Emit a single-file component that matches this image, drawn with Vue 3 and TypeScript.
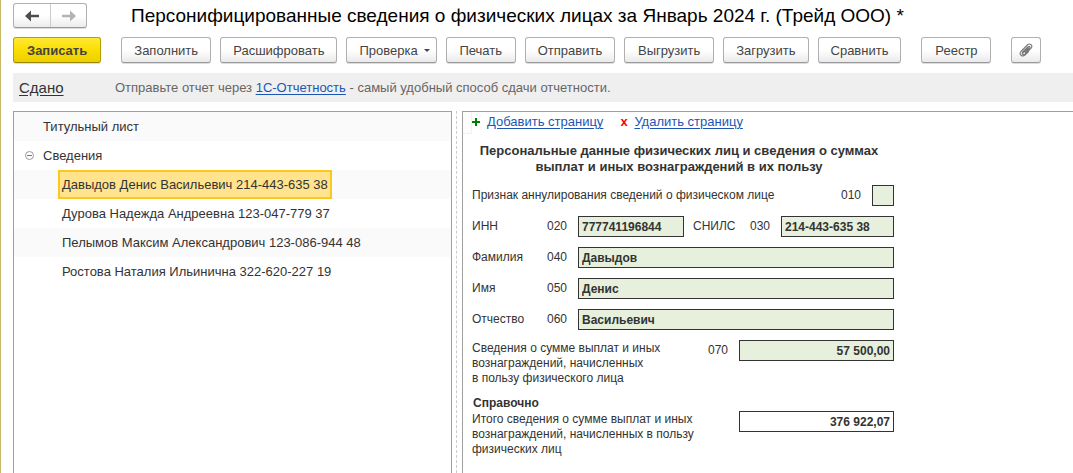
<script setup lang="ts">
import { ref } from 'vue'

interface Person {
  name: string
  snils: string
}

const people: Person[] = [
  { name: 'Давыдов Денис Васильевич', snils: '214-443-635 38' },
  { name: 'Дурова Надежда Андреевна', snils: '123-047-779 37' },
  { name: 'Пелымов Максим Александрович', snils: '123-086-944 48' },
  { name: 'Ростова Наталия Ильинична', snils: '322-620-227 19' },
]

const selected = ref(0)
const annulled = ref('')
const inn = ref('777741196844')
const snils = ref('214-443-635 38')
const lastName = ref('Давыдов')
const firstName = ref('Денис')
const patronymic = ref('Васильевич')
const amount = ref('57 500,00')
const total = ref('376 922,07')
</script>

<template>
  <main class="window">
    <header class="title-bar">
      <div class="nav">
        <button type="button" class="nav-btn" aria-label="Назад">
          <svg width="14" height="12" viewBox="0 0 14 12">
            <path d="M0 6 L6 .5 V4.8 H14 V7.2 H6 V11.5 Z" fill="#4d4d4d" />
          </svg>
        </button>
        <button type="button" class="nav-btn" aria-label="Вперед">
          <svg width="14" height="12" viewBox="0 0 14 12">
            <path d="M14 6 L8 .5 V4.8 H0 V7.2 H8 V11.5 Z" fill="#b3b3b3" />
          </svg>
        </button>
      </div>
      <h1>Персонифицированные сведения о физических лицах за Январь 2024 г. (Трейд ООО) *</h1>
    </header>

    <div class="toolbar">
      <button type="button" class="btn primary">Записать</button>
      <div class="group">
        <button type="button" class="btn wide">Заполнить</button>
        <button type="button" class="btn wide">Расшифровать</button>
        <button type="button" class="btn menu">
          Проверка
          <svg width="6" height="3" viewBox="0 0 6 3"><path d="M0 0 H6 L3 3 Z" fill="#444" /></svg>
        </button>
        <button type="button" class="btn">Печать</button>
        <button type="button" class="btn wide">Отправить</button>
        <button type="button" class="btn wide">Выгрузить</button>
        <button type="button" class="btn">Загрузить</button>
        <button type="button" class="btn">Сравнить</button>
      </div>
      <button type="button" class="btn">Реестр</button>
      <button type="button" class="btn icon" aria-label="Присоединенные файлы">
        <svg width="14" height="14" viewBox="0 0 14 14" fill="none" stroke="#777" stroke-width="1.1" stroke-linecap="round" stroke-linejoin="round">
          <path d="M3.8 10.2 L9.4 4.6 M9.6 8.6 L6 12.1 C3.3 14.5 -.4 11.3 1.9 8.5 L8.4 2 C11 -.5 14.3 2.7 12 5.3 L6.2 11 C4.4 12.6 2.2 10.7 3.7 9 L9.2 3.6 C10.4 2.6 11.6 3.9 10.6 5 L6.2 9.4" />
        </svg>
      </button>
    </div>

    <div class="banner">
      <a href="#" class="status">Сдано</a>
      <p>Отправьте отчет через <a href="#">1С-Отчетность</a> - самый удобный способ сдачи отчетности.</p>
    </div>

    <div class="panels">
      <nav class="tree" aria-label="Разделы отчета">
        <div class="row"><button type="button" class="node">Титульный лист</button></div>
        <div class="row">
          <button type="button" class="toggle" aria-label="Свернуть">
            <svg width="9" height="9" viewBox="0 0 9 9" fill="none" stroke="#999">
              <circle cx="4.5" cy="4.5" r="4" />
              <path d="M2 4.5 H7" stroke="#777" />
            </svg>
          </button>
          <button type="button" class="node">Сведения</button>
        </div>
        <div v-for="(person, i) in people" :key="person.snils" class="row child">
          <button type="button" class="node" :class="{ selected: i === selected }" @click="selected = i">
            {{ person.name }} {{ person.snils }}
          </button>
        </div>
      </nav>

      <div class="splitter"></div>

      <section class="page">
        <div class="corner"></div>
        <div class="sheet">
          <div class="page-actions">
            <svg class="plus" width="8" height="8" viewBox="0 0 8 8"><path d="M3 0 H5 V3 H8 V5 H5 V8 H3 V5 H0 V3 H3 Z" fill="#008000" /></svg>
            <a href="#">Добавить страницу</a>
            <span class="cross">x</span>
            <a href="#">Удалить страницу</a>
          </div>

          <h2>Персональные данные физических лиц и сведения о суммах<br />выплат и иных вознаграждений в их пользу</h2>

          <form @submit.prevent>
            <div class="line">
              <label class="grow" for="f010">Признак аннулирования сведений о физическом лице</label>
              <span class="code">010</span>
              <input id="f010" v-model="annulled" class="tick" type="text" />
            </div>
            <div class="line">
              <label class="name" for="f020">ИНН</label>
              <span class="code">020</span>
              <input id="f020" v-model="inn" class="inn" type="text" />
              <label class="snils-name" for="f030">СНИЛС</label>
              <span class="code">030</span>
              <input id="f030" v-model="snils" class="fill" type="text" />
            </div>
            <div class="line">
              <label class="name" for="f040">Фамилия</label>
              <span class="code">040</span>
              <input id="f040" v-model="lastName" class="fill" type="text" />
            </div>
            <div class="line">
              <label class="name" for="f050">Имя</label>
              <span class="code">050</span>
              <input id="f050" v-model="firstName" class="fill" type="text" />
            </div>
            <div class="line">
              <label class="name" for="f060">Отчество</label>
              <span class="code">060</span>
              <input id="f060" v-model="patronymic" class="fill" type="text" />
            </div>
            <div class="line tall">
              <label class="grow" for="f070">Сведения о сумме выплат и иных<br />вознаграждений, начисленных<br />в пользу физического лица</label>
              <span class="code">070</span>
              <input id="f070" v-model="amount" class="sum" type="text" />
            </div>
            <h3>Справочно</h3>
            <div class="line tall total">
              <label class="grow" for="total">Итого сведения о сумме выплат и иных<br />вознаграждений, начисленных в пользу<br />физических лиц</label>
              <input id="total" v-model="total" class="sum plain" type="text" readonly />
            </div>
          </form>
        </div>
      </section>
    </div>
  </main>
</template>

<style>
body {
  margin: 0;
  background: #fff;
}
</style>

<style scoped>
* {
  box-sizing: border-box;
}

.window {
  display: flex;
  flex-direction: column;
  min-height: 100vh;
  padding: 3px 0 0 12px;
  border-left: 1px solid #c8b96c;
  font: 13px/15px "Liberation Sans", Arial, sans-serif;
  color: #333;
}

button,
input {
  font: inherit;
  color: inherit;
}

a {
  color: #1d55b5;
  text-underline-offset: 2px;
}

.title-bar {
  display: flex;
  align-items: center;
  gap: 44px;
  height: 25px;
}

.nav {
  display: flex;
  flex: none;
  height: 25px;
  border: 1px solid #b0b0b0;
  border-bottom-color: #999;
  border-radius: 3px;
  background: linear-gradient(#fff 50%, #ececec);
  box-shadow: 0 1px 0 #ddd;
}

.nav-btn {
  display: flex;
  align-items: center;
  justify-content: center;
  width: 36px;
  padding: 0;
  border: 0;
  background: none;
}

.nav-btn + .nav-btn {
  border-left: 1px solid #ccc;
}

h1 {
  margin: 0;
  font-size: 19px;
  line-height: 24px;
  font-weight: 400;
  color: #000;
  white-space: nowrap;
}

.toolbar {
  display: flex;
  gap: 20px;
  margin-top: 9px;
}

.group {
  display: flex;
  gap: 9px;
}

.btn {
  min-width: 70px;
  height: 26px;
  padding: 0 12px;
  border: 1px solid #b0b0b0;
  border-bottom-color: #999;
  border-radius: 3px;
  background: linear-gradient(#fff 50%, #eaeaea);
  box-shadow: 0 1px 0 #ddd;
  color: #444;
  white-space: nowrap;
}

.wide {
  min-width: 90px;
}

.primary {
  padding: 0 13px;
  border-color: #b5a000;
  border-bottom-color: #998700;
  background: linear-gradient(#ffea35, #fade00 50%, #edcf00);
  font-weight: 700;
}

.menu {
  display: flex;
  align-items: center;
  gap: 6px;
  padding-right: 6px;
}

.icon {
  display: flex;
  align-items: center;
  justify-content: center;
  width: 30px;
  min-width: 0;
  padding: 0;
}

.banner {
  display: flex;
  align-items: center;
  height: 29px;
  margin-top: 10px;
  padding-left: 6px;
  background: #efefef;
  color: #666;
}

.banner p {
  margin: 0;
}

.status {
  width: 96px;
  font-size: 15px;
  color: #333;
}

.panels {
  display: grid;
  grid-template-columns: minmax(0, 439fr) 10px minmax(0, 611fr);
  flex: 1;
  margin-top: 9px;
}

.tree {
  border: 1px solid #a0a0a0;
  border-bottom: 0;
}

.row {
  display: flex;
  align-items: center;
  height: 29px;
  padding-left: 25px;
}

.row:nth-child(odd) {
  background: #fafafa;
}

.row:has(.toggle) {
  padding-left: 11px;
}

.row.child {
  padding-left: 44px;
}

.toggle {
  display: flex;
  width: 14px;
  padding: 0;
  border: 0;
  background: none;
}

.node {
  height: 29px;
  padding: 0 2px;
  border: 2px solid transparent;
  background: none;
  white-space: nowrap;
}

.node.selected {
  border-color: #fcc71e;
  background: #ffe48d;
}

.splitter {
  width: 5px;
  border-right: 1px dashed #ccc;
}

.page {
  display: flex;
  align-items: flex-start;
  border-top: 1px solid #a0a0a0;
  border-left: 1px solid #a0a0a0;
}

.corner {
  flex: none;
  width: 9px;
  height: 22px;
  border: solid #f2f2f2;
  border-width: 0 1px 1px 0;
  background: #fdfdfd;
}

.sheet {
  flex: 0 1 422px;
  min-width: 0;
}

.page-actions {
  display: flex;
  align-items: center;
  height: 19px;
}

.plus {
  margin-right: 7px;
}

.cross {
  width: 14px;
  margin-left: 17px;
  font-weight: 700;
  color: #f00;
}

h2 {
  margin: 12px 0 10px;
  padding-right: 8px;
  font-size: 13px;
  line-height: 16px;
  text-align: center;
  white-space: nowrap;
}

form {
  display: flex;
  flex-direction: column;
  gap: 10px;
  font-size: 12px;
}

.line {
  display: flex;
  align-items: center;
  white-space: nowrap;
}

.grow {
  flex: 1;
}

.name {
  width: 75px;
}

.snils-name {
  width: 66px;
  padding-left: 9px;
}

.code {
  width: 31px;
}

input {
  height: 21px;
  min-width: 0;
  padding: 0 3px;
  border: 1px solid #333;
  border-radius: 0;
  background: #e6f0dc;
  font-weight: 700;
}

.tick {
  width: 22px;
}

.inn {
  width: 106px;
}

.fill {
  flex: 1;
  width: 0;
}

.sum {
  width: 155px;
  text-align: right;
}

.plain {
  background: #fff;
}

.tall {
  align-items: flex-start;
}

.tall .grow {
  padding-top: 1px;
}

.tall .code {
  line-height: 21px;
}

h3 {
  margin: 0;
  padding-left: 1px;
  font-size: 12px;
  line-height: 15px;
}

.total {
  margin-top: -10px;
}
</style>
